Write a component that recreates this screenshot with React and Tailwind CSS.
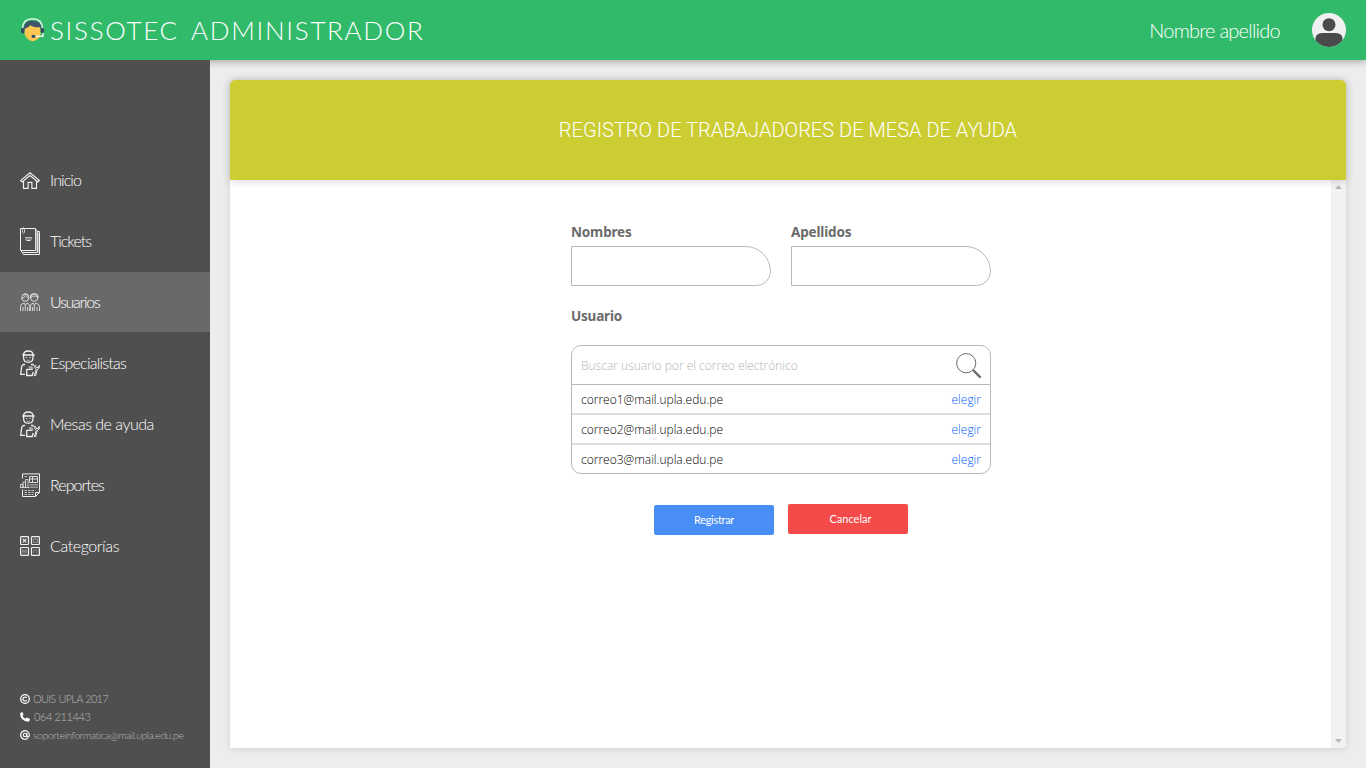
import React from "react";

function Line({ w = 20, h = 20, vb, sw = 1.2, children }) {
  return (
    <svg width={w} height={h} viewBox={vb || `0 0 ${w} ${h}`} fill="none" stroke="#f0f0f0" strokeWidth={sw} className="block shrink-0">
      {children}
    </svg>
  );
}

const HomeIcon = () => (
  <Line w={20} h={18} sw={1.2}>
    <path d="M.8 9.400 10 1.800l9.200 7.600-1.300 1.500L10 4.600 2.100 10.900z" />
    <path d="M3.500 10v7.400h4.600v-6h3.800v6h4.600V10" />
  </Line>
);

const TicketIcon = () => (
  <Line w={20} h={28} sw={1}>
    <path d="M.5 1.500H15.500V23.500H.5z" />
    <path d="M15.500 2.500 17.500 4V25.500H2.500L.5 23.500M17.500 4.500h2V27.500H3.500L2 25.500" />
    <path d="M16.500 4v20" stroke="#a5a5a5" strokeWidth="1.500" />
    <path d="M18.500 6v20" stroke="#999" strokeWidth="1" />
    <path d="M2.500 3.500V1.500Q3.500-.3 4.500 1.500V5.500Q3.500 7.500 2.500 5.500V3.500" stroke="#ccc" />
    <path d="M5 10.500h7M5 12h7" stroke="#bbb" />
    <path d="M6.500 13.500h4" />
  </Line>
);

const UsersIcon = () => (
  <Line w={20} h={18} sw={0.8}>
    <circle cx="5.300" cy="4.700" r="3.600" />
    <path d="M1.500 5.500Q4.500 4.800 5.500 2.500 7 5 9 5.200M2.800 1.800Q6-.8 8.800 3" />
    <circle cx="14.200" cy="4.700" r="3.600" />
    <path d="M10.500 5V3Q11 .5 14.200.5T18 3v2M11 4.500q1.500-1.500 3-1.500t3.400 1.200" />
    <path d="M.5 18v-4.500Q.6 11 4 10l1.400 2L7 10q2.500.7 2.700 3.500V18M3 18v-4M5.300 12v6M7.600 18v-4M10.400 18v-4.500Q10.600 10.800 13 10l1.300 2 1.400-2q3.700 1 3.800 3.500V18M12.500 18v-4M14.300 12v6M17 18v-4" />
  </Line>
);

const WorkerIcon = () => (
  <Line w={20} h={27} sw={1.3}>
    <path d="M3.500 5Q3.500 1 8.300 1T13 5M2.300 5h12.400" />
    <path d="M3.600 5v3Q3.800 12.300 8.300 12.300T13 8V5" />
    <path d="M5.800 7.500h1.700M9.400 7.500h1.700M6.800 10q1.600.8 3.200 0" strokeWidth=".9" stroke="#ccc" />
    <path d="M5 14.500H3.800Q2 14.700 1.600 17L.7 24.300H5M11 14.500h1.500q1 .2 1.300 1" />
    <path d="M6.700 19v6.500h5.500l1-3.500M6.700 19.300h6" />
    <path d="M8.500 16.800h4M9 18.200h4.500" stroke="#aaa" />
    <path d="M15 15q-1 3 1.300 4.300L14.300 26M19.200 15q1 3.700-2 4.700L15.500 26M15.500 15.500l.8 2h2l.7-1.800" strokeWidth="1" />
  </Line>
);

const ReportIcon = () => (
  <Line w={20} h={24} sw={1}>
    <path d="M2.500 5.500V.9H19.500V19.500L15.500 23.500H2.500V16.500" />
    <path d="M15.500 23.500v-4h4" />
    <path d="M9.500 3.500h8v6h-8zM12.500 3.500v6M9.500 6h8" stroke="#ddd" />
    <path d="M.5 14.500v-3h2.500v3M3 14.500V9h2.500v5.500M5.500 14.500V6.500H8v8M0 14.500h9" stroke="#ddd" strokeWidth=".9" />
    <path d="M9.500 11.500h8.500M9.500 13h8.500M9.500 14.500h8.500" stroke="#aaa" strokeWidth=".8" />
    <path d="M4.500 3.500h3M4.500 17.500h11M4.500 19.500h9M4.500 21.500h9" strokeDasharray="2.500 1" stroke="#ccc" strokeWidth=".9" />
  </Line>
);

const GridIcon = () => (
  <Line w={20} h={20} sw={1.2}>
    <rect x=".6" y=".6" width="7.900" height="7.900" rx=".7" />
    <rect x="11.500" y=".6" width="7.900" height="7.900" rx=".7" />
    <rect x=".6" y="11.500" width="7.900" height="7.900" rx=".7" />
    <rect x="11.500" y="11.500" width="7.900" height="7.900" rx=".7" />
    <path d="m2.800 2.800 3.500 3.500m0-3.500-3.500 3.500" strokeWidth="1.200" />
    <path d="M13.500 2.800h4v3.700h-4zM14 3.200l1.500 1.500L17 3.200M2.500 14h4v3h-4zM2.500 15.500h4M13.700 17.200v-2q0-1.600 1.700-1.600t1.700 1.600v2" stroke="#999" strokeWidth=".8" />
  </Line>
);

const MENU = [
  { label: "Inicio", Icon: HomeIcon, cls: "tracking-[-0.9px]" },
  { label: "Tickets", Icon: TicketIcon, cls: "tracking-[-1px]" },
  { label: "Usuarios", Icon: UsersIcon, cls: "tracking-[-1.25px]", active: true },
  { label: "Especialistas", Icon: WorkerIcon, cls: "tracking-[-0.75px]" },
  { label: "Mesas de ayuda", Icon: WorkerIcon, cls: "tracking-[-0.5px]" },
  { label: "Reportes", Icon: ReportIcon, cls: "tracking-[-0.95px]" },
  { label: "Categorías", Icon: GridIcon, cls: "tracking-[-0.4px]" },
];

const Logo = () => (
  <svg width="23" height="24" viewBox="0 0 23 24" className="block shrink-0">
    <path d="M4 7.500h15.500V15q0 4-3.500 6.500-4.300 3.500-8.500 0Q3.500 18.500 3.500 14z" fill="#fdc751" />
    <path d="M3 11.500Q2 2.800 11.500 2.800T20.300 11.500L18.500 9.300Q12 9.500 9.300 7 8 9.500 4.800 10.300z" fill="#3f5468" />
    <path d="M1.500 10.500Q2 .8 11.500.8T21.500 10.500" fill="none" stroke="#dff5e8" strokeWidth="1.500" />
    <rect x="0" y="10" width="3.400" height="5.500" rx="1.400" fill="#324a5e" />
    <rect x="19.600" y="10" width="3.400" height="5" rx="1.400" fill="#324a5e" />
    <path d="M22 15v3.200h-8" fill="none" stroke="#f1f5e8" strokeWidth="1.500" />
    <rect x="10.700" y="17" width="3.600" height="2.800" rx=".6" fill="#324a5e" />
  </svg>
);

const Avatar = () => (
  <svg width="34" height="34" viewBox="0 0 34 34" className="block shrink-0">
    <defs>
      <clipPath id="disc"><circle cx="17" cy="17" r="17" /></clipPath>
    </defs>
    <circle cx="17" cy="17" r="17" fill="#f0f0f0" />
    <g clipPath="url(#disc)" fill="#4a4a4a">
      <circle cx="17" cy="11.700" r="6.500" />
      <path d="M3.500 28V25q.5-5 8-5h11q7.500 0 8 5v3Q26 34 17 34T3.500 28z" />
    </g>
  </svg>
);

const CopyIcon = () => (
  <svg width="10" height="10" viewBox="0 0 10 10" fill="none" stroke="#fff" className="block shrink-0">
    <circle cx="5" cy="5" r="4.300" strokeWidth="1.300" />
    <path d="M6.700 3.900a2 2 0 1 0 0 2.200" strokeWidth="1.200" />
  </svg>
);
const PhoneIcon = () => (
  <svg width="10" height="10" viewBox="0 0 10 10" className="block shrink-0">
    <path d="M.3.900 2 .100q.4-.1.600.300l.9 2q.1.400-.2.700l-.8.700q.9 2 2.800 2.900l.8-.9q.3-.3.700-.1l2.500.9q.6.200.5.700L9.300 9q-.1.700-.8.700Q.200 9 .1 1.400.1 1 .3.900z" fill="#fff" />
  </svg>
);
const AtIcon = () => (
  <svg width="10" height="10" viewBox="0 0 10 10" fill="none" stroke="#fff" className="block shrink-0">
    <path d="M8 8.100A4.300 4.300 0 1 1 9.300 5q0 1.900-1.300 1.900T6.900 5.500V3.200" strokeWidth="1.200" />
    <circle cx="5" cy="5" r="1.700" strokeWidth="1.100" />
  </svg>
);

const SearchIcon = () => (
  <svg width="26" height="26" viewBox="0 0 26 26" fill="none" stroke="#6b6b6b" className="block shrink-0">
    <circle cx="10.200" cy="10.200" r="9.600" strokeWidth="1" />
    <path d="m16.500 16.500 2 2" strokeWidth="1" />
    <path d="m17.600 17.600 7 7" strokeWidth="2.200" />
  </svg>
);

function Field({ label }) {
  return (
    <label className="flex w-[200px] flex-col">
      <span className="h-[22px] text-[13.5px] font-bold leading-[17px] tracking-[-0.15px] text-[#6b6b6b]">{label}</span>
      <input className="h-10 w-full rounded-tr-[28px] rounded-br-[16px] border border-[#b9b9b9] bg-white px-2 outline-none" />
    </label>
  );
}

export default function App() {
  return (
    <div className="flex h-[768px] w-[1366px] flex-col overflow-hidden bg-[#ededed] font-['Lato',sans-serif] font-light">
      <header className="z-10 flex h-[60px] shrink-0 items-center bg-[#32ba6b] pl-[21px] pr-5 text-white shadow-[0_1px_8px_rgba(0,0,0,0.35)]">
        <Logo />
        <h1 className="ml-[6px] whitespace-nowrap text-[26px] leading-[38px] tracking-[1.68px] [word-spacing:4.500px]">SISSOTEC ADMINISTRADOR</h1>
        <span className="ml-auto mr-[32px] whitespace-nowrap text-[20px] tracking-[-0.75px]">Nombre apellido</span>
        <Avatar />
      </header>

      <div className="flex min-h-0 flex-1">
        <aside className="z-20 flex w-[210px] shrink-0 flex-col bg-[#4f4f4f] pt-[90px]">
          <nav className="flex flex-col gap-px">
            {MENU.map(({ label, Icon, cls, active }) => (
              <a key={label} className={`flex h-[60px] items-center gap-[10px] pl-5 text-white ${active ? "bg-[#696969]" : ""}`}>
                <Icon />
                <span className={`whitespace-nowrap text-[16px] leading-5 ${cls}`}>{label}</span>
              </a>
            ))}
          </nav>
          <footer className="mb-6 mt-auto flex flex-col pl-5 text-[11px] leading-[18px] text-[#b8b8b8]">
            <div className="flex items-center gap-[3px]"><CopyIcon /><span className="tracking-[-0.75px] [word-spacing:0.8px]">OUIS UPLA 2017</span></div>
            <div className="flex items-center gap-[4px]"><PhoneIcon /><span className="tracking-[-0.4px]">064 211443</span></div>
            <div className="flex items-center gap-[3px]"><AtIcon /><span className="text-[10.5px] tracking-[-0.47px]">soporteinformatica@mail.upla.edu.pe</span></div>
          </footer>
        </aside>

        <main className="flex flex-1 p-5">
          <section className="flex flex-1 flex-col rounded-t-[5px] rounded-br-[5px] bg-white shadow-[0_1px_8px_rgba(0,0,0,0.12)]">
            <div className="z-10 flex h-[100px] shrink-0 items-center justify-center rounded-t-[5px] bg-[#cccd33] shadow-[0_1px_8px_rgba(0,0,0,0.17)]">
              <h2 className="whitespace-nowrap font-['Roboto',sans-serif] text-[20px] font-light tracking-[0.02px] text-white">REGISTRO DE TRABAJADORES DE MESA DE AYUDA</h2>
            </div>
            <div className="flex min-h-0 flex-1">
              <form className="flex flex-1 flex-col items-center pl-px pt-[44px] font-['Noto_Sans',sans-serif]">
                <div className="flex gap-5">
                  <Field label="Nombres" />
                  <Field label="Apellidos" />
                </div>
                <div className="mt-[22px] w-[420px] pb-px text-[13.5px] font-bold leading-[17px] tracking-[-0.2px] text-[#6b6b6b]">Usuario</div>
                <div className="mt-[19px] flex h-[129px] w-[420px] flex-col rounded-[10px] border border-[#b9b9b9] font-['Open_Sans',sans-serif] text-[12px] font-light">
                  <div className="flex h-[39px] items-center justify-between border-b border-[#b9b9b9] pl-[9px] pr-[8px] pt-px">
                    <span className="text-[#b4b4b4]">Buscar usuario por el correo electrónico</span>
                    <SearchIcon />
                  </div>
                  {["correo1", "correo2", "correo3"].map((n, i) => (
                    <div key={n} className={`flex items-center justify-between px-[9px] pt-[2px] ${i < 2 ? "h-[30px] border-b-2 border-[#dedede]" : "h-[28px]"}`}>
                      <span className="text-black">{n}@mail.upla.edu.pe</span>
                      <a className="text-[#0060ff]">elegir</a>
                    </div>
                  ))}
                </div>
                <div className="mt-[30px] flex gap-[14px] font-['Lato',sans-serif] text-[11px] font-normal text-white">
                  <button type="button" className="mt-px h-[30px] w-[120px] rounded-[2px] bg-[#498ef5] tracking-[-0.3px]">Registrar</button>
                  <button type="button" className="h-[30px] w-[120px] rounded-[2px] bg-[#f54a4a] pl-[5px]">Cancelar</button>
                </div>
              </form>
              <div className="flex w-[15px] shrink-0 flex-col items-center justify-between rounded-br-[5px] bg-[#f2f2f2] pb-[5px] pt-[5px]">
                <svg width="7" height="4" viewBox="0 0 7 4"><path d="M3.500 0 7 4H0z" fill="#b8b8b8" /></svg>
                <svg width="7" height="4" viewBox="0 0 7 4"><path d="M0 0h7L3.500 4z" fill="#b8b8b8" /></svg>
              </div>
            </div>
          </section>
        </main>
      </div>
    </div>
  );
}
